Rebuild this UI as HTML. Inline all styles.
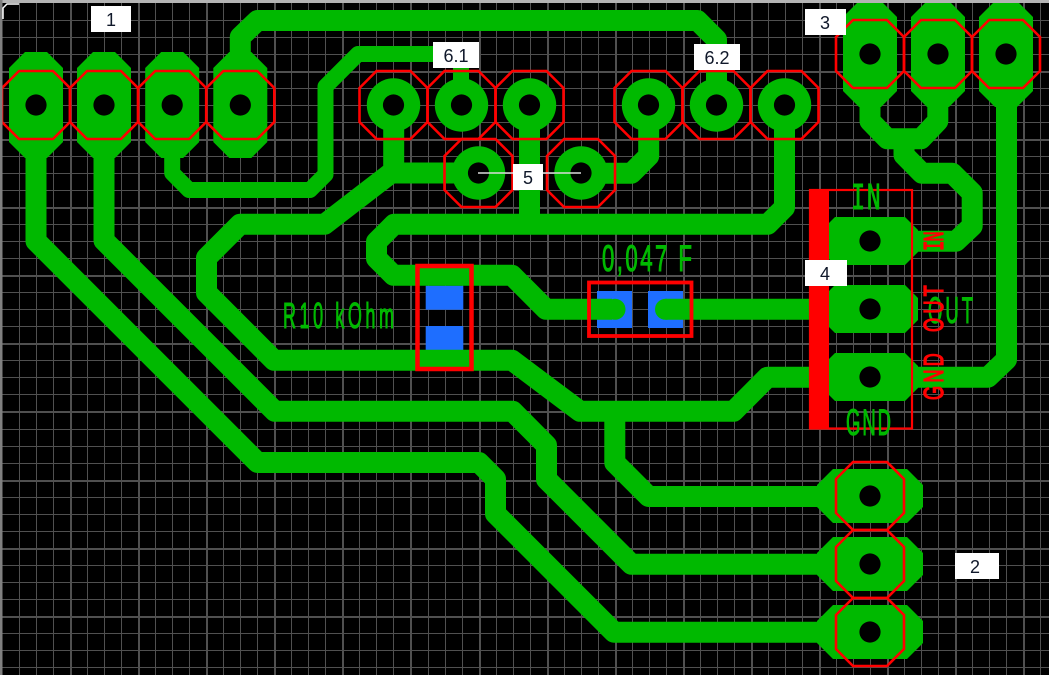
<!DOCTYPE html>
<html lang="en">
<head>
<meta charset="utf-8">
<title>PCB layout</title>
<style>
html,body{margin:0;padding:0;background:#000;width:1049px;height:675px;overflow:hidden}
svg{display:block;position:absolute;left:0;top:0}
.t{fill:none;stroke:#00b900;stroke-width:21;stroke-linejoin:round;stroke-linecap:butt}
.n{stroke-width:16}
.g{font-family:"Liberation Sans",sans-serif;fill:#00b900;stroke:#00b900;stroke-width:1.1}
.r{font-family:"Liberation Sans",sans-serif;fill:#f00;stroke:#f00;stroke-width:1.3}
.l{font-family:"Liberation Sans",sans-serif;font-size:18px;fill:#10182a;text-anchor:middle}
</style>
</head>
<body>
<svg width="1049" height="675" viewBox="0 0 1049 675" xmlns="http://www.w3.org/2000/svg">
<defs>
<polygon id="vp" fill="#00b900" points="-11,-53 11,-53 27,-37 27,37 11,53 -11,53 -27,37 -27,-37"/>
<polygon id="hp" fill="#00b900" points="-37,-27 37,-27 53,-11 53,11 37,27 -37,27 -53,11 -53,-11"/>
<polygon id="mp" fill="#00b900" points="-35,-24 35,-24 48,-11 48,11 35,24 -35,24 -48,11 -48,-11"/>
<circle id="rp" r="26.7" fill="#00b900"/>
<polygon id="oc" fill="none" stroke="#f00" stroke-width="2.6" points="-17,-34 17,-34 34,-17 34,17 17,34 -17,34 -34,17 -34,-17"/>
<circle id="ho" r="10.6" fill="#000"/>
</defs>
<rect width="1049" height="675" fill="#000"/>

<!-- grid -->
<path fill="none" stroke="#505050" stroke-width="1" d="M19.5 3V675M36.5 3V675M53.5 3V675M87.5 3V675M104.5 3V675M121.5 3V675M155.5 3V675M172.5 3V675M189.5 3V675M223.5 3V675M240.5 3V675M257.5 3V675M291.5 3V675M308.5 3V675M325.5 3V675M359.5 3V675M376.5 3V675M393.5 3V675M428.5 3V675M445.5 3V675M462.5 3V675M496.5 3V675M513.5 3V675M530.5 3V675M564.5 3V675M581.5 3V675M598.5 3V675M632.5 3V675M649.5 3V675M666.5 3V675M700.5 3V675M717.5 3V675M734.5 3V675M768.5 3V675M785.5 3V675M802.5 3V675M836.5 3V675M853.5 3V675M870.5 3V675M904.5 3V675M921.5 3V675M938.5 3V675M972.5 3V675M989.5 3V675M1006.5 3V675M1040.5 3V675"/>
<path fill="none" stroke="#505050" stroke-width="1" d="M0 20.5H1049M0 37.5H1049M0 54.5H1049M0 88.5H1049M0 105.5H1049M0 122.5H1049M0 156.5H1049M0 173.5H1049M0 190.5H1049M0 224.5H1049M0 241.5H1049M0 258.5H1049M0 292.5H1049M0 309.5H1049M0 326.5H1049M0 360.5H1049M0 377.5H1049M0 394.5H1049M0 429.5H1049M0 446.5H1049M0 463.5H1049M0 497.5H1049M0 514.5H1049M0 531.5H1049M0 565.5H1049M0 582.5H1049M0 599.5H1049M0 633.5H1049M0 650.5H1049M0 667.5H1049"/>
<path fill="none" stroke="#505050" stroke-width="2" d="M71 3V675M139 3V675M207 3V675M275 3V675M343 3V675M411 3V675M480 3V675M548 3V675M616 3V675M684 3V675M752 3V675M820 3V675M888 3V675M956 3V675M1024 3V675"/>
<path fill="none" stroke="#505050" stroke-width="2" d="M0 72H1049M0 140H1049M0 208H1049M0 276H1049M0 344H1049M0 412H1049M0 481H1049M0 549H1049M0 617H1049"/>

<!-- SMD blue pads -->
<rect x="425.7" y="285.7" width="37.6" height="24" fill="#1e6eff"/>
<rect x="425.7" y="326" width="37.6" height="24" fill="#1e6eff"/>
<rect x="597" y="291" width="35" height="37" fill="#1e6eff"/>
<rect x="648" y="291" width="35" height="37" fill="#1e6eff"/>

<!-- traces -->
<path class="t" d="M36 105V241.1L257.5 462.5H479L495.5 479V513.7L614 632.2H870"/>
<path class="t" d="M104 105V240.5L274.8 411.3H512.7L546.5 445.3V479.3L631.5 564.3H870"/>
<path class="t n" d="M172.2 105V173L189 190H310L325.5 174.5V86.5L358 54H461V105"/>
<path class="t" d="M240.3 105V37L257.5 20.5H697.5L716.5 39.5V105"/>
<path class="t" d="M393.7 105V173H478M393.7 171L324.5 224.3H240L206.5 257.8V292.7L274 360.3H512L580 411.3H733.5L767.5 377.2H870M614.8 411.3V462.7L648.6 496.5H870"/>
<path class="t" d="M529.5 105V224.3M784.5 105V207.5L767.7 224.3H394L376.5 241.8V258.3L393.5 275.3H512L546 309.3H612"/>
<circle cx="615" cy="309.3" r="10.5" fill="#00b900"/>
<circle cx="665.5" cy="309.3" r="10.5" fill="#00b900"/>
<path class="t" d="M665.5 309.3H870"/>
<path class="t" d="M648.7 105V156L631.5 173.2H581"/>
<path class="t" d="M870 54V121L887.3 138.8H921L937.8 121V54M904 138.8V155L922 173.2H952.3L972.2 193V226L956 241.2H870"/>
<path class="t" d="M1006.5 54V359.5L988 377.2H870"/>

<!-- through-hole pads -->
<use href="#vp" x="36" y="105"/><use href="#vp" x="104" y="105"/><use href="#vp" x="172.2" y="105"/><use href="#vp" x="240.3" y="105"/>
<use href="#vp" x="870" y="54"/><use href="#vp" x="938" y="54"/><use href="#vp" x="1006" y="54"/>
<use href="#hp" x="870" y="496"/><use href="#hp" x="870" y="564"/><use href="#hp" x="870" y="632"/>
<use href="#mp" x="870" y="241"/><use href="#mp" x="870" y="309"/><use href="#mp" x="870" y="377"/>
<use href="#rp" x="393.5" y="105"/><use href="#rp" x="461.5" y="105"/><use href="#rp" x="529.5" y="105"/>
<use href="#rp" x="648.5" y="105"/><use href="#rp" x="716.5" y="105"/><use href="#rp" x="784.5" y="105"/>
<use href="#rp" x="478.5" y="173"/><use href="#rp" x="581" y="173"/>

<!-- holes -->
<use href="#ho" x="36" y="105"/><use href="#ho" x="104" y="105"/><use href="#ho" x="172.2" y="105"/><use href="#ho" x="240.3" y="105"/>
<use href="#ho" x="870" y="54"/><use href="#ho" x="938" y="54"/><use href="#ho" x="1006" y="54"/>
<use href="#ho" x="870" y="496"/><use href="#ho" x="870" y="564"/><use href="#ho" x="870" y="632"/>
<use href="#ho" x="870" y="241"/><use href="#ho" x="870" y="309"/><use href="#ho" x="870" y="377"/>
<use href="#ho" x="393.5" y="105"/><use href="#ho" x="461.5" y="105"/><use href="#ho" x="529.5" y="105"/>
<use href="#ho" x="648.5" y="105"/><use href="#ho" x="716.5" y="105"/><use href="#ho" x="784.5" y="105"/>
<use href="#ho" x="478.5" y="173"/><use href="#ho" x="581" y="173"/>

<!-- red octagons -->
<use href="#oc" x="36" y="105"/><use href="#oc" x="104" y="105"/><use href="#oc" x="172.2" y="105"/><use href="#oc" x="240.3" y="105"/>
<use href="#oc" x="870" y="54"/><use href="#oc" x="938" y="54"/><use href="#oc" x="1006" y="54"/>
<use href="#oc" x="870" y="496"/><use href="#oc" x="870" y="564"/><use href="#oc" x="870" y="632"/>
<use href="#oc" x="393.5" y="105"/><use href="#oc" x="461.5" y="105"/><use href="#oc" x="529.5" y="105"/>
<use href="#oc" x="648.5" y="105"/><use href="#oc" x="716.5" y="105"/><use href="#oc" x="784.5" y="105"/>
<use href="#oc" x="478.5" y="173"/><use href="#oc" x="581" y="173"/>

<!-- component outlines -->
<rect x="417.5" y="266" width="54" height="103" fill="none" stroke="#f00" stroke-width="4.5"/>
<rect x="589" y="282.5" width="102.5" height="53.5" fill="none" stroke="#f00" stroke-width="3.8"/>
<rect x="810" y="190" width="102" height="238.5" fill="none" stroke="#f00" stroke-width="2.2"/>
<rect x="809.5" y="189.5" width="19.5" height="239.5" fill="#f00"/>

<!-- green silkscreen text -->
<text class="g" transform="translate(283 328) scale(.5 1)" font-size="36" textLength="222" lengthAdjust="spacing">R10 kOhm</text>
<text class="g" transform="translate(602 271) scale(.6 1)" font-size="37" textLength="150" lengthAdjust="spacing">0,047 F</text>
<text transform="translate(851 209) scale(.62 1)" font-family="Liberation Mono, monospace" fill="#00b900" stroke="#00b900" stroke-width="1" font-size="38" textLength="48" lengthAdjust="spacing">IN</text>
<text class="g" transform="translate(928 323) scale(.5 1)" font-size="37" textLength="90" lengthAdjust="spacing">OUT</text>
<text class="g" transform="translate(846 435) scale(.5 1)" font-size="37" textLength="90" lengthAdjust="spacing">GND</text>

<!-- red rotated text -->
<text transform="translate(943 251) rotate(-90) scale(.6 1)" font-family="Liberation Mono, monospace" fill="#f00" stroke="#f00" stroke-width="1.2" font-size="29" textLength="33" lengthAdjust="spacing">IN</text>
<text class="r" transform="translate(943 332) rotate(-90) scale(.65 1)" font-size="28" textLength="72" lengthAdjust="spacing">OUT</text>
<text class="r" transform="translate(943 400) rotate(-90) scale(.65 1)" font-size="28" textLength="72" lengthAdjust="spacing">GND</text>

<!-- white marker line -->
<path d="M478 173H581" stroke="#dcdcdc" stroke-width="1.5" fill="none"/>

<!-- labels -->
<rect x="91" y="6" width="40" height="26" fill="#fff"/><text class="l" x="111" y="26">1</text>
<rect x="433" y="42" width="46" height="26" fill="#fff"/><text class="l" x="456" y="62">6.1</text>
<rect x="694" y="44" width="46" height="26" fill="#fff"/><text class="l" x="717" y="64">6.2</text>
<rect x="805" y="9" width="41" height="26" fill="#fff"/><text class="l" x="825" y="29">3</text>
<rect x="513" y="164" width="30" height="26" fill="#fff"/><text class="l" x="528" y="184">5</text>
<rect x="805" y="260" width="42" height="26" fill="#fff"/><text class="l" x="825" y="280">4</text>
<rect x="955" y="553" width="44" height="26" fill="#fff"/><text class="l" x="975" y="573">2</text>

<!-- window frame -->
<rect x="0" y="0" width="1049" height="3" fill="#b4b4b4"/>
<rect x="0" y="0" width="2.5" height="675" fill="#808080"/>
<path d="M3 19V8L7 4H19" fill="none" stroke="#fff" stroke-width="1.5"/>
</svg>
</body>
</html>
